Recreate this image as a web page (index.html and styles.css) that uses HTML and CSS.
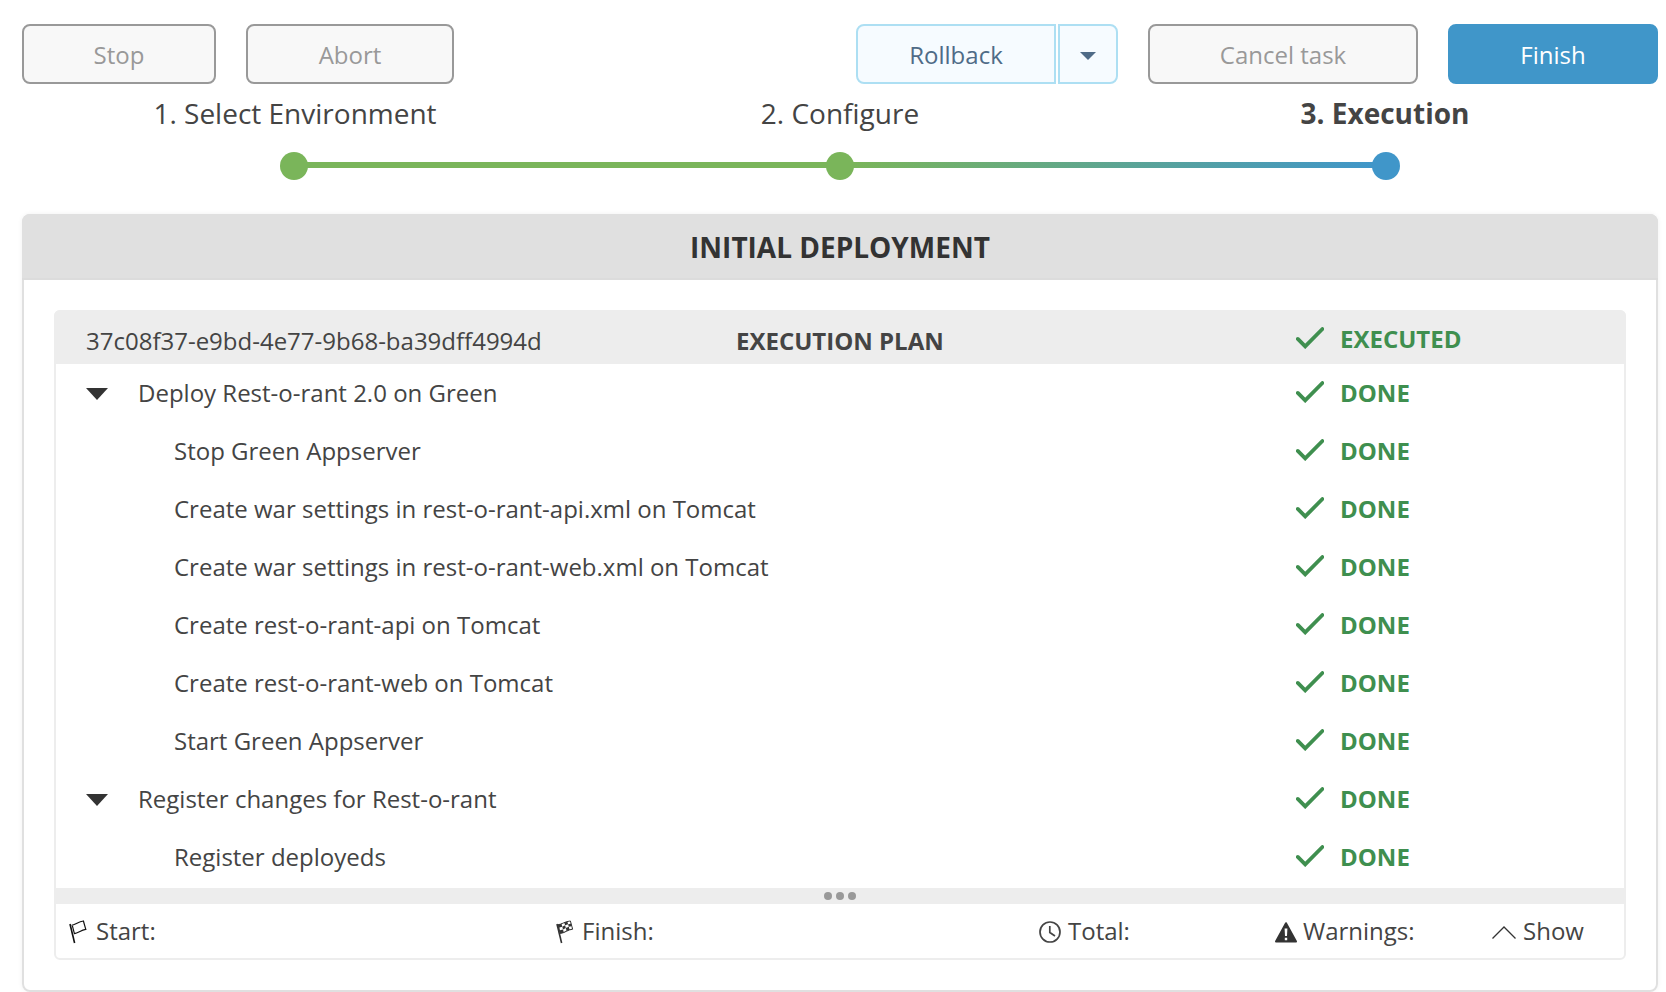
FILE: index.html
```html
<!DOCTYPE html>
<html lang="en">
<head>
<meta charset="utf-8">
<title>Initial deployment</title>
<link rel="stylesheet" href="styles.css">
</head>
<body>
<svg class="defs" width="0" height="0" aria-hidden="true">
  <symbol id="check" viewBox="0 0 28 22"><path d="M1.8 11.9 9.2 19.4 26.4 2" fill="none" stroke="#3f8f4f" stroke-width="3.8" stroke-linecap="round" stroke-linejoin="miter"/></symbol>
  <symbol id="tri" viewBox="0 0 22 12"><path d="M0 0H22L11 12Z" fill="#333"/></symbol>
</svg>
<div class="toolbar">
  <button class="btn stop">Stop</button>
  <button class="btn abort">Abort</button>
  <span class="spacer"></span>
  <div class="split">
    <button class="btn rollback">Rollback</button>
    <button class="btn more" aria-label="More"><svg width="16" height="8" viewBox="0 0 16 8"><path d="M0 0H16L8 8Z" fill="#4f6b87"/></svg></button>
  </div>
  <button class="btn cancel">Cancel task</button>
  <button class="btn finish">Finish</button>
</div>
<div class="steps">
  <div class="step first"><span class="label">1. Select Environment</span><div class="track"><i></i><b class="dot"></b><i class="green"></i></div></div>
  <div class="step"><span class="label">2. Configure</span><div class="track"><i class="green"></i><b class="dot"></b><i class="fade-a"></i></div></div>
  <div class="step current"><span class="label">3. Execution</span><div class="track"><i class="fade-b"></i><b class="dot"></b><i></i></div></div>
</div>
<section class="panel">
  <h1 class="panel-title">INITIAL DEPLOYMENT</h1>
  <div class="plan">
    <div class="plan-head">
      <span class="task-id">37c08f37-e9bd-4e77-9b68-ba39dff4994d</span>
      <span class="plan-title">EXECUTION PLAN</span>
      <span class="status"><svg class="check"><use href="#check"/></svg>EXECUTED</span>
    </div>
    <div class="rows">
      <div class="row group"><svg class="tri"><use href="#tri"/></svg><span class="name">Deploy Rest-o-rant 2.0 on Green</span><span class="status"><svg class="check"><use href="#check"/></svg>DONE</span></div>
      <div class="row"><span class="name">Stop Green Appserver</span><span class="status"><svg class="check"><use href="#check"/></svg>DONE</span></div>
      <div class="row"><span class="name">Create war settings in rest-o-rant-api.xml on Tomcat</span><span class="status"><svg class="check"><use href="#check"/></svg>DONE</span></div>
      <div class="row"><span class="name">Create war settings in rest-o-rant-web.xml on Tomcat</span><span class="status"><svg class="check"><use href="#check"/></svg>DONE</span></div>
      <div class="row"><span class="name">Create rest-o-rant-api on Tomcat</span><span class="status"><svg class="check"><use href="#check"/></svg>DONE</span></div>
      <div class="row"><span class="name">Create rest-o-rant-web on Tomcat</span><span class="status"><svg class="check"><use href="#check"/></svg>DONE</span></div>
      <div class="row"><span class="name">Start Green Appserver</span><span class="status"><svg class="check"><use href="#check"/></svg>DONE</span></div>
      <div class="row group"><svg class="tri"><use href="#tri"/></svg><span class="name">Register changes for Rest-o-rant</span><span class="status"><svg class="check"><use href="#check"/></svg>DONE</span></div>
      <div class="row"><span class="name">Register deployeds</span><span class="status"><svg class="check"><use href="#check"/></svg>DONE</span></div>
    </div>
    <div class="splitter"><i></i><i></i><i></i></div>
    <div class="foot">
      <span class="item start"><svg width="18" height="24" viewBox="0 0 18 24"><path d="M1 4 5.6 23" fill="none" stroke="#111" stroke-width="1.6"/><path d="M2.6 5.4C6 5 9.5 1.6 14.4 1L16.8 9.4C12 10 9.5 12.8 5.4 13.6L3.2 5.2" fill="none" stroke="#111" stroke-width="1.2"/></svg>Start:</span>
      <span class="item end"><svg width="18" height="24" viewBox="0 0 18 24"><path d="M1 4 5.6 23" fill="none" stroke="#333" stroke-width="1.6"/><path d="M1.8 4.8C6 4.5 9 1.3 14.4 1L16.6 9.2C12 9.5 9 13 4.2 13.4Z" fill="#333" stroke="#333" stroke-width="1"/><path d="M5.6 4.3 8.4 2.9 9.1 5.3 6.3 6.8ZM11.5 1.9 14 1.5 14.6 3.8 12.1 4.2ZM9.1 5.3 12.1 4.2 12.8 6.8 9.8 8.1ZM3.4 7.5 6.3 6.8 7 9.4 4 10.3ZM7 9.4 9.8 8.1 10.5 10.6 7.7 12ZM12.8 6.8 15.4 6.3 16 8.7 13.4 9.3Z" fill="#fff"/></svg>Finish:</span>
      <span class="item total"><svg width="22" height="22" viewBox="0 0 22 22"><g fill="none" stroke="#444" stroke-width="1.7"><circle cx="11" cy="11" r="10"/><path d="M10.8 5V11.5L16 15"/></g></svg>Total:</span>
      <span class="item warn"><svg width="22" height="21" viewBox="0 0 22 21"><path d="M11 1.2 21 19.5H1Z" fill="#333" stroke="#333" stroke-width="2" stroke-linejoin="round"/><path d="M9.6 6.5h2.8L12 14h-2ZM9.8 15.8h2.4v2.4h-2.4Z" fill="#fff"/></svg>Warnings:</span>
      <span class="item show"><svg width="24" height="13" viewBox="0 0 24 13"><path d="M.5 12.5 12 1 23.5 12.5" fill="none" stroke="#333" stroke-width="1.3"/></svg>Show</span>
    </div>
  </div>
</section>
</body>
</html>
```
FILE: styles.css
```css
* { box-sizing: border-box; }
body { margin: 0; padding: 24px 8px 0 22px; background: #fff; font: 24px/34px "Open Sans", "Noto Sans", sans-serif; color: #444; height: 992px; overflow: hidden; }
svg { display: block; flex: none; overflow: visible; }
.defs { position: absolute; }
.toolbar { display: flex; height: 60px; }
.btn { display: flex; align-items: center; justify-content: center; height: 60px; padding: 2px 0 0; border: 2px solid #999; border-radius: 8px; background: #f8f8f8; color: #999; font: inherit; white-space: nowrap; }
.stop { width: 194px; margin-right: 30px; }
.abort { width: 208px; }
.spacer { flex: 1; }
.split { display: flex; gap: 2px; margin-right: 30px; }
.rollback, .more { border-color: #addff3; background: #f6fbff; color: #4f6b87; }
.rollback { width: 200px; border-radius: 8px 0 0 8px; }
.more { width: 60px; border-radius: 0 8px 8px 0; padding-top: 4px; }
.cancel { width: 270px; margin-right: 30px; }
.finish { width: 210px; background: #4096c9; border-color: #4096c9; color: #fff; }
.steps { display: grid; grid-template-columns: repeat(3, 546px); margin-left: -1px; height: 130px; }
.step { display: flex; flex-direction: column; align-items: center; padding-top: 10px; }
.label { font-size: 28px; line-height: 38px; height: 58px; white-space: nowrap; }
.first .label { padding-left: 2px; }
.current .label { padding-right: 2px; font-weight: 700; }
.track { display: flex; align-items: center; width: 100%; height: 28px; }
.track i { flex: 1; height: 6px; margin: 0 -2px 2px; }
.dot { width: 28px; height: 28px; border-radius: 50%; background: #7ab55a; z-index: 1; }
.current .dot { background: #4096c9; }
.green { background: #7ab55a; }
.fade-a { background: linear-gradient(90deg, #7ab55a, #5da592); }
.fade-b { background: linear-gradient(90deg, #5da592, #4096c9); }
.panel { height: 778px; border: 2px solid #e0e0e0; border-radius: 8px; box-shadow: 0 0 5px rgba(0,0,0,.06); padding: 0 30px; }
.panel-title { margin: -2px -32px 30px; height: 66px; border-radius: 8px 8px 0 0; border-bottom: 2px solid #dcdcdc; background: #e0e0e0; font-size: 28px; line-height: 66px; font-weight: 700; text-align: center; color: #333; }
.plan { height: 650px; border: 2px solid #ededed; border-radius: 6px; }
.plan-head { display: grid; grid-template-columns: 650px 560px 1fr; margin: -2px -2px 0; height: 54px; background: #ededed; border-radius: 6px 6px 0 0; padding: 14px 0 0 32px; }
.plan-title { font-weight: 700; }
.status { display: flex; align-items: center; gap: 16px; height: 34px; font-weight: 700; color: #3f8f4f; white-space: nowrap; }
.plan-head .status { margin-top: -2px; }
.check { width: 28px; height: 22px; margin-top: -2px; }
.rows { height: 524px; }
.row { display: flex; align-items: center; height: 58px; padding-left: 118px; }
.row.group { padding-left: 30px; }
.tri { width: 22px; height: 12px; margin: 1px 30px 0 0; }
.name { flex: 1; white-space: nowrap; }
.row .status { width: 328px; }
.splitter { display: flex; align-items: center; justify-content: center; gap: 3.6px; height: 16px; background: #ededed; }
.splitter i { width: 8px; height: 8px; border-radius: 50%; background: #999; }
.foot { display: grid; grid-template-columns: 487px 483px 236px 217px 1fr; height: 54px; padding-left: 13px; }
.item { display: flex; align-items: center; white-space: nowrap; gap: 8px; }
.item svg { margin-top: 2px; }
.start { gap: 9px; }
.total, .show { gap: 7px; }
.warn { gap: 6px; }
```
